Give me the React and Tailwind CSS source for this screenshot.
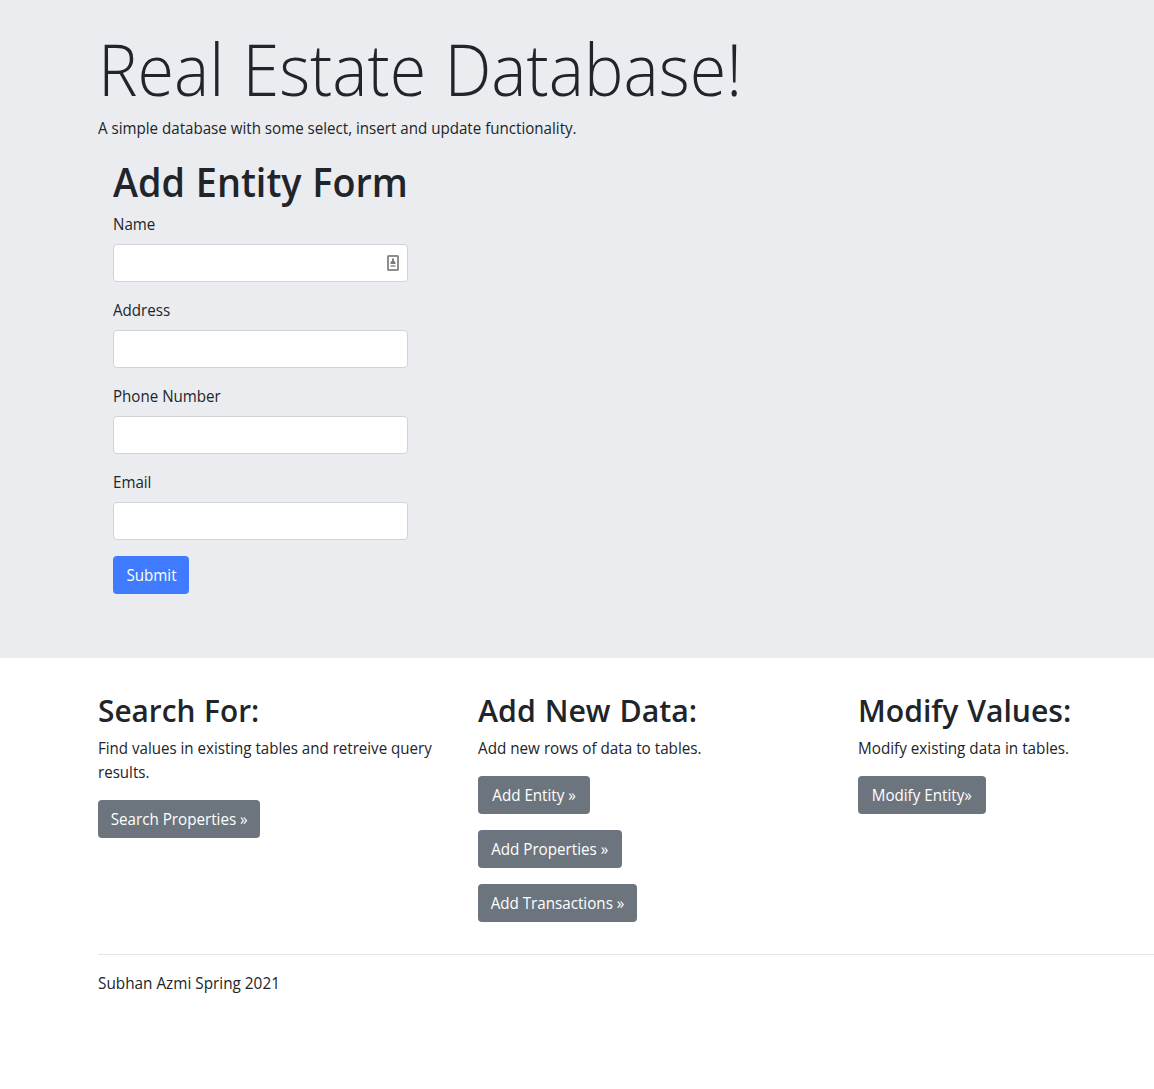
const fields = ["Name", "Address", "Phone Number", "Email"];

const columns = [
  {
    title: "Search For:",
    scale: "scale-x-[0.961]",
    text: "Find values in existing tables and retreive query results.",
    textScale: "scale-x-[0.943]",
    buttons: [{ label: "Search Properties »", width: "w-[162px]" }],
  },
  {
    title: "Add New Data:",
    scale: "scale-x-[0.978]",
    text: "Add new rows of data to tables.",
    textScale: "scale-x-[0.952]",
    buttons: [
      { label: "Add Entity »", width: "w-[112px]" },
      { label: "Add Properties »", width: "w-[144px]" },
      { label: "Add Transactions »", width: "w-[159px]" },
    ],
  },
  {
    title: "Modify Values:",
    scale: "scale-x-[0.972]",
    text: "Modify existing data in tables.",
    textScale: "scale-x-[0.953]",
    buttons: [{ label: "Modify Entity»", width: "w-[128px]" }],
  },
];

function ContactIcon() {
  return (
    <svg className="absolute top-[11px] right-[9px] h-[16px] w-[12px]" viewBox="0 0 12 16" fill="none">
      <rect x="1" y="1" width="10" height="14" rx="0.5" stroke="#8d8d8d" strokeWidth="2" />
      <path d="M5 3.5h2V6l1.5 1v2h-5V7L5 6z" fill="#7c7c7c" />
      <path d="M3.5 11h5" stroke="#a8a8a8" strokeWidth="2" />
    </svg>
  );
}

function Button({ label, color, width }) {
  return (
    <button className={`flex h-[38px] items-center justify-center rounded text-white ${color} ${width}`}>
      <span className="inline-block scale-x-[0.948] whitespace-nowrap">{label}</span>
    </button>
  );
}

export default function App() {
  return (
    <div className="min-h-[1089px] overflow-hidden bg-white font-['Open_Sans',sans-serif] text-base leading-6 text-[#212529]">
      <header className="h-[658px] bg-[#eaecf0] pt-[22px] pl-[98px]">
        <h1 className="mb-2 h-[86px] w-max origin-left scale-x-[0.936] text-[71px] leading-[93px] font-light [word-spacing:1px] whitespace-nowrap">Real Estate Database!</h1>
        <p className="mb-4 w-max origin-left scale-x-[0.945]">A simple database with some select, insert and update functionality.</p>
        <form className="w-[325px] px-[15px]" onSubmit={(e) => e.preventDefault()}>
          <h2 className="mb-2 h-12 w-max origin-left scale-x-[0.969] text-[39px] leading-[51px] font-semibold [word-spacing:1px] whitespace-nowrap">Add Entity Form</h2>
          {fields.map((name, i) => (
            <div key={name} className="mb-4">
              <label htmlFor={name} className="mb-2 block h-6 w-max origin-left scale-x-[0.945] leading-[25px]">{name}</label>
              <div className="relative">
                <input id={name} className="block h-[38px] w-full rounded border border-[#ced4da] bg-white px-3 outline-none" />
                {i === 0 && <ContactIcon />}
              </div>
            </div>
          ))}
          <Button label="Submit" color="bg-[#407bff]" width="w-[76px]" />
        </form>
      </header>
      <main className="pt-8 pl-[98px]">
        <div className="grid w-[1140px] grid-cols-3">
          {columns.map((c) => (
            <section key={c.title}>
              <h2 className={`mb-2 h-[38px] w-max origin-left text-[31px] leading-[41px] font-semibold [word-spacing:1px] whitespace-nowrap ${c.scale}`}>{c.title}</h2>
              <p className={`mb-4 w-[370px] origin-left ${c.textScale}`}>{c.text}</p>
              {c.buttons.map((b) => (
                <div key={b.label} className="mb-4">
                  <Button label={b.label} color="bg-[#6c757d]" width={b.width} />
                </div>
              ))}
            </section>
          ))}
        </div>
        <hr className="my-4 border-[#e5e5e5]" />
        <footer className="w-max origin-left scale-x-[0.957]">Subhan Azmi Spring 2021</footer>
      </main>
    </div>
  );
}
